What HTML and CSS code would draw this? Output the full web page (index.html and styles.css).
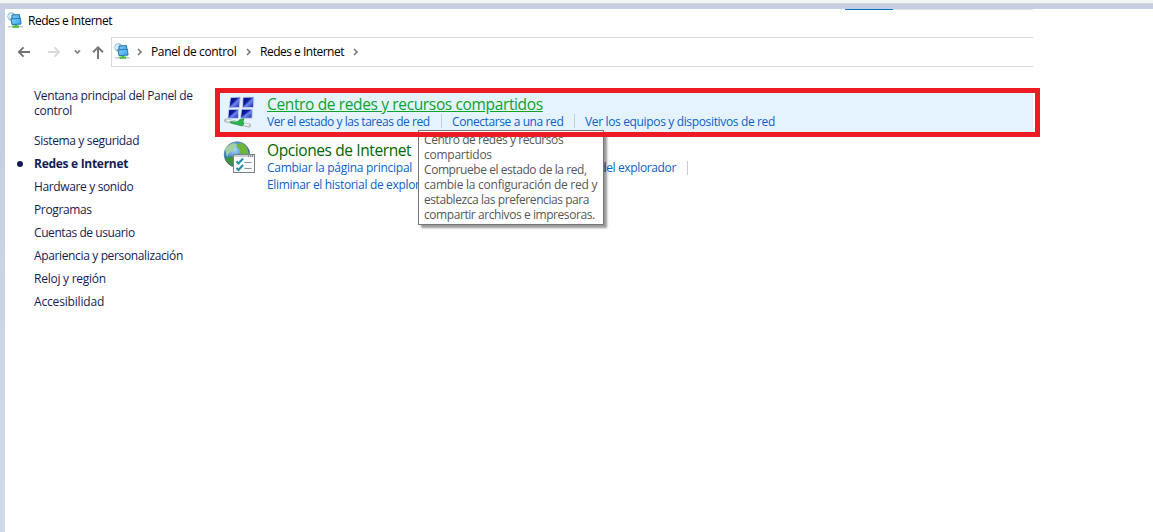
FILE: index.html
```html
<!DOCTYPE html>
<html lang="es">
<head>
<meta charset="utf-8">
<title>Redes e Internet</title>
<link rel="stylesheet" href="styles.css">
</head>
<body>
<svg width="0" height="0" class="defs" aria-hidden="true">
  <defs>
    <linearGradient id="screen" x1="0" y1="0" x2="1" y2="1"><stop offset="0" stop-color="#8bd0f6"/><stop offset="1" stop-color="#2fa2f0"/></linearGradient>
    <linearGradient id="panel" x1="0" y1="0" x2="1" y2="1"><stop offset="0" stop-color="#000c80"/><stop offset=".4" stop-color="#0a1aa0"/><stop offset=".55" stop-color="#7088ea"/><stop offset="1" stop-color="#0717b0"/></linearGradient>
    <radialGradient id="sea" cx=".4" cy=".3" r=".75"><stop offset="0" stop-color="#a9dcf5"/><stop offset=".5" stop-color="#3d86cf"/><stop offset="1" stop-color="#123c8c"/></radialGradient>
    <symbol id="net" viewBox="0 0 16 16">
      <circle cx="4.500" cy="4.500" r="4.200" fill="#8cc4de"/><path d="M.8 4l2.700-3 2.500 1-1 3-3 2z" fill="#d8edf5"/>
      <path d="M5 3l7.500-.4.500 4.400-8 1z" fill="url(#screen)" stroke="#286f9f"/>
      <path d="M4 7l9.500-.6.500 5.700-9 .6z" fill="url(#screen)" stroke="#2a78ab"/>
      <path d="M1 14.700h15" stroke="#c3cdd0" stroke-width="1.500"/><path d="M5.500 14.700h6.500M9 13v2" stroke="#44bd3d" stroke-width="2.200"/>
    </symbol>
  </defs>
</svg>
<div class="desktop">
  <div class="strip"></div>
  <div class="window">
    <header class="titlebar">
      <svg class="net"><use href="#net"/></svg><span class="t-title">Redes e Internet</span>
      <div class="edge"></div>
    </header>
    <nav class="navbar">
      <svg class="arrows" width="106" height="30" viewBox="0 0 106 30" fill="none" stroke-width="1.800">
        <path d="M25 15H14M18.500 10.300L13.800 15l4.700 4.700" stroke="#707070"/>
        <path d="M43 15h11M49.500 10.300l4.700 4.700-4.700 4.700" stroke="#dadada"/>
        <path d="M69.800 13.300l2.600 2.600 2.600-2.600" stroke="#858585"/>
        <path d="M93 22V10.500M88 15.300l5-5 5 5" stroke="#777" stroke-width="2"/>
      </svg>
      <div class="address">
        <svg class="net"><use href="#net"/></svg>
        <svg class="chev" viewBox="0 0 6 8"><path d="M1 1l3 3-3 3"/></svg>
        <span class="t-panel">Panel de control</span>
        <svg class="chev" viewBox="0 0 6 8"><path d="M1 1l3 3-3 3"/></svg>
        <span class="t-crumb">Redes e Internet</span>
        <svg class="chev" viewBox="0 0 6 8"><path d="M1 1l3 3-3 3"/></svg>
      </div>
    </nav>
    <div class="body">
      <aside class="side">
        <a class="home">Ventana principal del Panel de<br><span class="loose">control</span></a>
        <a>Sistema y seguridad</a>
        <a class="current">Redes e Internet</a>
        <a>Hardware y sonido</a>
        <a>Programas</a>
        <a class="tight">Cuentas de usuario</a>
        <a>Apariencia y personalización</a>
        <a class="loose">Reloj y región</a>
        <a class="wide">Accesibilidad</a>
      </aside>
      <main class="main">
        <section class="marked">
          <div class="highlight">
            <svg class="icon" width="32" height="34" viewBox="0 0 32 34">
              <g stroke="#c9d7ec" stroke-width=".9" fill="url(#panel)">
                <path d="M6.500 3.500L16.500 3l-1.200 10.500L5 14z"/><path d="M19 3.300l11-.3-.5 10.500-11 .3z"/>
                <path d="M4.800 15.500l10-.3-.5 9-10.500.5z"/><path d="M17.500 15.200h11l-.5 9-11.500.3z"/>
              </g>
              <path d="M2 26.500L25 31.500" stroke="#b5bdc0" stroke-width="4" stroke-linecap="round"/>
              <path d="M2.500 26.300L25 31.300" stroke="#edf0f1" stroke-width="2"/>
              <path d="M6 27.500l7 .5 3-2.500 4-1-1 3.500 1 2-2 2-11-3z" fill="#2bb34f" stroke="#12943a" stroke-width=".6"/>
            </svg>
            <div>
              <h2 class="hot">Centro de redes y recursos compartidos</h2>
              <div class="links"><a class="l1">Ver el estado y las tareas de red</a><i></i><a class="l2">Conectarse a una red</a><i></i><a class="l3">Ver los equipos y dispositivos de red</a></div>
            </div>
          </div>
        </section>
        <section class="internet">
          <svg class="icon" width="34" height="34" viewBox="0 0 34 34">
            <circle cx="14" cy="13.500" r="12.800" fill="url(#sea)" stroke="#426b92" stroke-width=".6"/>
            <path d="M2 8l4-4 5-2 3 2-3 3-1 3-4 2-2 4z" fill="#a5cfa0"/>
            <path d="M3 17l6-2 3 3-2 7-4-2-3-3z" fill="#3f9438"/><path d="M14 3l5-1 5 4 2 7-5 1-4-2 0-3-3-3z" fill="#6fb53a"/>
            <rect x="10.500" y="13.500" width="21" height="18" fill="#f7f9fa" stroke="#7b8287"/>
            <path d="M11 15h20" stroke="#c9d0d5" stroke-width="2"/><path d="M25 15h1m1 0h1m1 0h1" stroke="#555"/>
            <path d="M13.500 20.500l2 2 4.500-5M13.500 27l2 2 4.500-5" stroke="#258bab" stroke-width="1.900" fill="none"/>
            <path d="M21.500 21.500h7M21.500 27.500h7" stroke="#8c9194"/>
          </svg>
          <div>
            <h2>Opciones de Internet</h2>
            <div class="links"><a class="l4">Cambiar la página principal</a><a class="l5">del explorador</a><i></i></div>
            <div class="links"><a class="l6">Eliminar el historial de explor</a></div>
          </div>
        </section>
      </main>
    </div>
  </div>
</div>
<div class="tooltip">Centro de redes y recursos<br><span class="loose">compartidos</span><br>Compruebe el estado de la red,<br><span class="loose">cambie la configuración de red y</span><br>establezca las preferencias para<br>compartir archivos e impresoras.</div>
</body>
</html>
```
FILE: styles.css
```css
* { box-sizing: border-box; }
body { margin: 0; width: 1153px; height: 532px; overflow: hidden; position: relative; font: 12px/15px "Open Sans", "Noto Sans", sans-serif; letter-spacing: -.36px; color: #000; white-space: nowrap; }
.defs { position: absolute; }
.desktop { height: 532px; display: flex; flex-direction: column; background: linear-gradient(#c5cfe1, #c5cfe1 100px, #d0d9e7); }
.strip { height: 4px; flex: none; background: #f2f5f5; border-bottom: 1px solid #d6d8dc; }
.window { flex: 1; margin: 5px 0 0 5px; background: #fff; }
.titlebar { height: 28px; display: flex; align-items: flex-start; }
.titlebar .net { margin: 3px 5px 0 2px; }
.titlebar span { margin-top: 4px; }
.net { width: 16px; height: 16px; flex: none; }
.edge { height: 1px; width: 188px; margin-left: 733px; background: linear-gradient(90deg, #0a70c4 48px, #e4e4e7 48px); }
.navbar { display: flex; width: 1028px; height: 30px; }
.arrows { flex: none; }
.address { flex: 1; height: 30px; display: flex; align-items: center; border: 1px solid #d9d9d9; border-right: 0; padding-left: 2px; }
.address .net { margin-top: -2px; }
.chev { width: 6px; height: 8px; flex: none; margin-left: 9px; fill: none; stroke: #777; stroke-width: 1.600; }
.address .chev:nth-of-type(2) { margin-left: 7px; }
.address span { margin: -1px 0 0 8px; }
.t-title, .t-crumb { width: 84px; letter-spacing: -.5px; }
.t-panel { width: 86px; }
.loose { letter-spacing: -.25px; }
.tight { letter-spacing: -.42px; }
.wide { letter-spacing: -.17px; }
.body { display: flex; }
.side { width: 210px; padding: 21px 0 0 29px; display: flex; flex-direction: column; gap: 8px; color: #151c55; }
.side .home { margin-bottom: 7px; }
.side .current { font-weight: 700; letter-spacing: -.29px; display: flex; align-items: center; }
.current::before { content: ""; width: 6px; height: 6px; border-radius: 50%; background: #151c55; margin: 0 11px 0 -17px; }
.main { width: 825px; padding-top: 21px; }
.marked { height: 49px; padding: 5px 7px 5px 5px; position: relative; }
/* red annotation frame, drawn over the tooltip */
.marked::after { content: ""; position: absolute; inset: 0; border: 5px solid #ed1c24; z-index: 3; }
.highlight { height: 39px; background: #e5f3ff; display: flex; padding-left: 4px; }
.icon { flex: none; margin-top: 1px; }
.highlight > div { margin-left: 11px; }
h2 { margin: 0; padding-top: 1px; height: 20px; font-size: 15.500px; line-height: 20px; font-weight: 400; letter-spacing: -.4px; color: #006600; }
h2.hot { color: #0ba32d; letter-spacing: -.36px; text-decoration: underline; }
.links { display: flex; align-items: center; height: 16px; color: #0b61c9; }
.links i { width: 1px; height: 14px; background: #c8cdd2; margin: 0 10px 0 11px; }
.l1 { width: 163px; letter-spacing: -.46px; }
.l2 { width: 111px; letter-spacing: -.4px; }
.l3 { letter-spacing: -.35px; }
.l4 { width: 145px; letter-spacing: -.27px; }
.l5 { width: 264px; display: flex; justify-content: flex-end; }
.l6 { letter-spacing: -.33px; }
.internet { display: flex; padding: 2px 0 0 8px; }
.internet .icon { margin-top: 2px; }
.internet > div { margin-left: 10px; }
.internet .links { height: 17px; }
.tooltip { position: absolute; left: 418px; top: 130px; width: 186px; height: 95px; background: #fff; border: 1px solid #767676; box-shadow: 3px 3px 2px rgba(0,0,0,.4); padding: 1px 5px; color: #575757; letter-spacing: -.43px; z-index: 2; }
```
